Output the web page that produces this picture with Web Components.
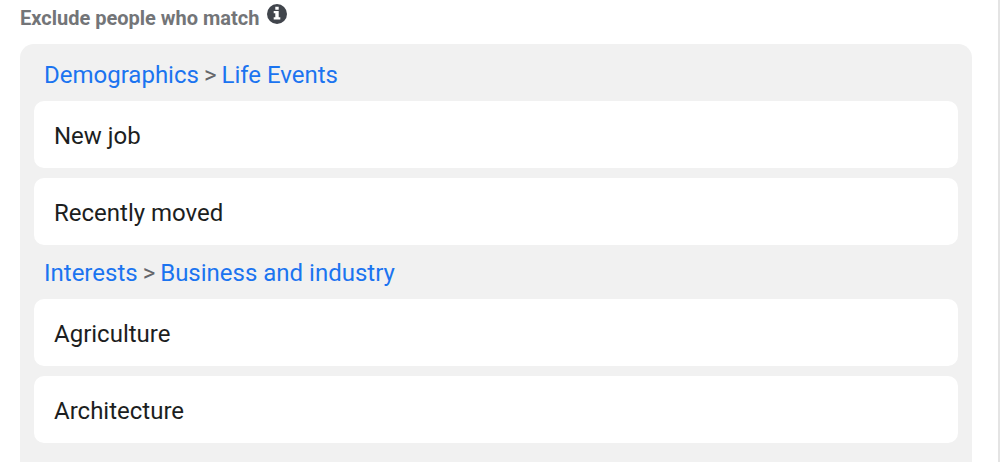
<!DOCTYPE html>
<html lang="en">
<head>
<meta charset="utf-8">
<title>Audience exclusions</title>
<style>
html, body { height: 100%; margin: 0; }
body { background: #fff; color: #1c1e21; font-family: Roboto, sans-serif; font-size: 24px; line-height: 32px; }
</style>
</head>
<body>
<exclude-audience>
  <info-heading slot="heading">Exclude people who match</info-heading>
  <match-group>
    <category-trail slot="trail" parent="Demographics" child="Life Events"></category-trail>
    <match-item>New job</match-item>
    <match-item>Recently moved</match-item>
  </match-group>
  <match-group>
    <category-trail slot="trail" parent="Interests" child="Business and industry"></category-trail>
    <match-item>Agriculture</match-item>
    <match-item>Architecture</match-item>
  </match-group>
</exclude-audience>
<script>
class BaseElement extends HTMLElement {
  constructor() {
    super();
    this.attachShadow({ mode: "open" }).innerHTML = this.constructor.markup;
  }
}

class ExcludeAudience extends BaseElement {
  static markup = `
    <style>
      :host { display: flex; flex-direction: column; box-sizing: border-box; min-height: 100%;
              padding: 0 26px 0 20px; border-right: 2px solid #e4e4e4; }
      section { flex: 1; box-sizing: border-box; padding: 3px 14px 0; background: #f1f1f1;
                border-radius: 14px 14px 0 0; }
    </style>
    <slot name="heading"></slot>
    <section><slot></slot></section>`;
}

class InfoHeading extends BaseElement {
  static markup = `
    <style>
      :host { display: flex; align-items: flex-start; gap: 7px; height: 44px; }
      h2 { margin: 0; padding-top: 6px; color: #737578; font-size: 20px; line-height: 24px; font-weight: 700; }
      button { display: block; margin: 0; padding: 3px 0 0; border: 0; background: none; }
      svg { display: block; width: 22px; height: 22px; }
    </style>
    <h2><slot></slot></h2>
    <button type="button" aria-label="More information">
      <svg viewBox="0 0 22 22" aria-hidden="true">
        <circle cx="11" cy="11" r="10" fill="#41454c"/>
        <path fill="#fff" d="M9.3 3.8h3.4v3H9.3zM7.7 8.1h5v6.2h1.6v2.2H7.7v-2.2h1.6v-4H7.7z"/>
      </svg>
    </button>`;
}

class MatchGroup extends BaseElement {
  static markup = `
    <style>
      :host { display: block; }
      .items { display: grid; gap: 10px; }
    </style>
    <slot name="trail"></slot>
    <div class="items"><slot></slot></div>`;
}

class CategoryTrail extends BaseElement {
  static markup = `
    <style>
      :host { display: block; padding: 12px 10px 10px; }
      nav { display: flex; gap: 5px; }
      a { color: #1b74f0; text-decoration: none; }
      span { color: #65676b; font-size: 24px; }
    </style>
    <nav aria-label="Category"><a class="parent" href="#"></a><span>&gt;</span><a class="child" href="#"></a></nav>`;
  connectedCallback() {
    for (const name of ["parent", "child"]) {
      this.shadowRoot.querySelector("." + name).textContent = this.getAttribute(name);
    }
  }
}

class MatchItem extends BaseElement {
  static markup = `
    <style>
      :host { display: flex; align-items: center; box-sizing: border-box; min-height: 67px;
              padding: 2px 20px 0; background: #fff; border-radius: 10px; }
    </style>
    <slot></slot>`;
}

customElements.define("exclude-audience", ExcludeAudience);
customElements.define("info-heading", InfoHeading);
customElements.define("match-group", MatchGroup);
customElements.define("category-trail", CategoryTrail);
customElements.define("match-item", MatchItem);
</script>
</body>
</html>
